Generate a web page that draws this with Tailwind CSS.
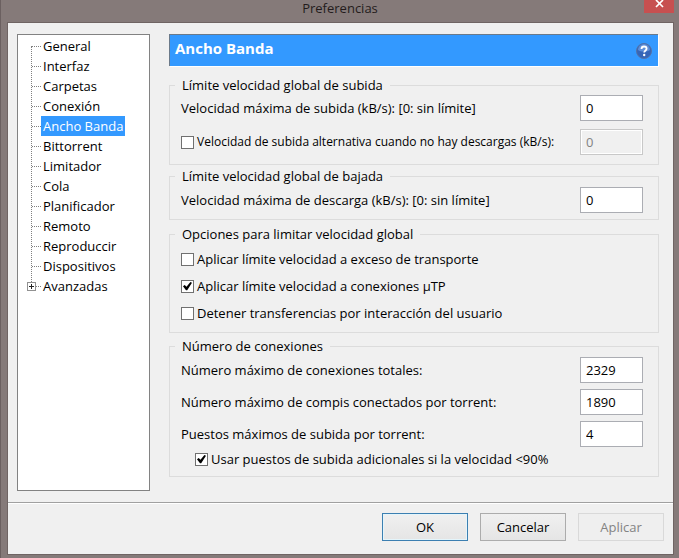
<!DOCTYPE html>
<html lang="es">
<head>
  <meta charset="UTF-8">
  <meta name="viewport" content="width=device-width, initial-scale=1.0">
  <title>Preferencias</title>
  <script src="https://cdn.jsdelivr.net/npm/@tailwindcss/browser@4"></script>
</head>
<body class="min-h-screen flex flex-col bg-[#857a79] border-l border-[#6b6060] font-['Open_Sans','Noto_Sans',sans-serif] text-[13px] leading-5 text-black">
  <!-- Title bar -->
  <header class="relative h-[22px] shrink-0 flex justify-center">
    <h1 class="text-[13px] leading-4 text-[#241c1c]">Preferencias</h1>
    <button aria-label="Cerrar" class="absolute right-[5px] top-0 w-[30px] h-[13px] bg-[#c75050] flex justify-center">
      <svg class="w-[9px] h-[8px]" viewBox="0 0 9 8" fill="none" stroke="#fff" stroke-width="1.7"><path d="M1 0l7 7M8 0L1 7"/></svg>
    </button>
  </header>

  <main class="flex-1 flex flex-col ml-[6px] mr-[5px] mb-[3px] bg-[#f0f0f0] border border-[#6f6463]">
    <div class="flex-1 flex gap-[19px] pl-[9px] pr-[14px] pt-[11px] pb-[11px]">
      <!-- Section tree -->
      <nav class="w-[133px] shrink-0 bg-white border border-[#828282] pt-px">
        <ul class="relative">
          <li class="absolute left-[13px] top-[10px] h-[240px] border-l border-dotted border-[#808080]" aria-hidden="true"></li>
          <li class="flex items-center pl-[14px]"><span class="w-[9px] border-t border-dotted border-[#808080]"></span><a href="#" class="px-[2px]">General</a></li>
          <li class="flex items-center pl-[14px]"><span class="w-[9px] border-t border-dotted border-[#808080]"></span><a href="#" class="px-[2px]">Interfaz</a></li>
          <li class="flex items-center pl-[14px]"><span class="w-[9px] border-t border-dotted border-[#808080]"></span><a href="#" class="px-[2px]">Carpetas</a></li>
          <li class="flex items-center pl-[14px]"><span class="w-[9px] border-t border-dotted border-[#808080]"></span><a href="#" class="px-[2px]">Conexión</a></li>
          <li class="flex items-center pl-[14px]"><span class="w-[9px] border-t border-dotted border-[#808080]"></span><a href="#" aria-current="page" class="px-[2px] bg-[#3399ff] text-white">Ancho Banda</a></li>
          <li class="flex items-center pl-[14px]"><span class="w-[9px] border-t border-dotted border-[#808080]"></span><a href="#" class="px-[2px]">Bittorrent</a></li>
          <li class="flex items-center pl-[14px]"><span class="w-[9px] border-t border-dotted border-[#808080]"></span><a href="#" class="px-[2px]">Limitador</a></li>
          <li class="flex items-center pl-[14px]"><span class="w-[9px] border-t border-dotted border-[#808080]"></span><a href="#" class="px-[2px]">Cola</a></li>
          <li class="flex items-center pl-[14px]"><span class="w-[9px] border-t border-dotted border-[#808080]"></span><a href="#" class="px-[2px]">Planificador</a></li>
          <li class="flex items-center pl-[14px]"><span class="w-[9px] border-t border-dotted border-[#808080]"></span><a href="#" class="px-[2px]">Remoto</a></li>
          <li class="flex items-center pl-[14px]"><span class="w-[9px] border-t border-dotted border-[#808080]"></span><a href="#" class="px-[2px]">Reproduccir</a></li>
          <li class="flex items-center pl-[14px]"><span class="w-[9px] border-t border-dotted border-[#808080]"></span><a href="#" class="px-[2px]">Dispositivos</a></li>
          <li class="relative flex items-center pl-[14px]">
            <button aria-label="Expandir Avanzadas" class="absolute left-[9px] top-[6px]">
              <svg class="block w-[9px] h-[9px]" viewBox="0 0 9 9" shape-rendering="crispEdges"><rect x=".5" y=".5" width="8" height="8" fill="#fff" stroke="#919191"/><path d="M2 4.5h5M4.5 2v5" stroke="#222"/></svg>
            </button>
            <span class="w-[9px] border-t border-dotted border-[#808080]"></span><a href="#" class="px-[2px]">Avanzadas</a>
          </li>
        </ul>
      </nav>

      <!-- Bandwidth page -->
      <section class="flex-1 min-w-0">
        <div class="h-8 mr-px bg-[#3399ff] border-t border-l border-t-[#6b7a8a] border-l-[#6b7a8a] shadow-[1px_1px_0_#fff] flex justify-between pl-[5px] pr-[6px]">
          <h2 class="text-[15px] leading-[26px] font-bold text-white">Ancho Banda</h2>
          <button aria-label="Ayuda" class="self-center">
            <svg class="block w-4 h-4" viewBox="0 0 16 16"><circle cx="8" cy="8" r="7.5" fill="#3565b8" stroke="#5572a6"/><path d="M2 7a6 6 0 0 1 12 0c-3 2-9 2-12 0z" fill="#5f8fd8"/><path d="M5.500 6C5.500 4.400 6.600 3.500 8 3.500s2.600.8 2.600 2.200c0 1.700-2.400 1.900-2.400 3.900" fill="none" stroke="#fff" stroke-width="1.800"/><circle cx="8.200" cy="12" r="1.200" fill="#fff"/></svg>
          </button>
        </div>

        <fieldset class="mt-[11px] border border-[#dcdcdc] px-[5px] pb-[9px]">
          <legend class="px-[7px] leading-4">Límite velocidad global de subida</legend>
          <div class="pl-[6px] pr-[10px] pt-[2px] flex flex-col gap-2">
            <div class="flex items-center justify-between">
              <label for="up">Velocidad máxima de subida (kB/s): [0: sin límite]</label>
              <input id="up" type="text" value="0" class="w-[63px] h-[26px] bg-white border border-[#abadb3] px-[5px]">
            </div>
            <div class="flex items-center justify-between">
              <label class="flex items-center gap-[3px] text-xs leading-5 whitespace-nowrap"><input type="checkbox" class="appearance-none w-[13px] h-[13px] bg-white border border-[#707070]">Velocidad de subida alternativa cuando no hay descargas (kB/s):</label>
              <input type="text" value="0" disabled aria-label="Velocidad de subida alternativa" class="w-[63px] h-[26px] bg-[#f0f0f0] border border-[#c8c8c8] px-[5px] text-[#838383] shadow-[inset_0_0_0_1px_#fff]">
            </div>
          </div>
        </fieldset>

        <fieldset class="mt-[3px] border border-[#dcdcdc] px-[5px] pb-[6px]">
          <legend class="px-[7px] leading-4">Límite velocidad global de bajada</legend>
          <div class="pl-[6px] pr-[10px] pt-[3px] flex items-center justify-between">
            <label for="down">Velocidad máxima de descarga (kB/s): [0: sin límite]</label>
            <input id="down" type="text" value="0" class="w-[63px] h-[26px] bg-white border border-[#abadb3] px-[5px]">
          </div>
        </fieldset>

        <fieldset class="mt-[6px] border border-[#dcdcdc] px-[5px] pb-[9px]">
          <legend class="px-[7px] leading-4">Opciones para limitar velocidad global</legend>
          <div class="pl-[6px] pt-[7px] flex flex-col items-start gap-[7px]">
            <label class="flex items-center gap-[3px]"><input type="checkbox" class="appearance-none w-[13px] h-[13px] bg-white border border-[#707070]">Aplicar límite velocidad a exceso de transporte</label>
            <label class="relative flex items-center gap-[3px]">
              <input type="checkbox" checked class="peer appearance-none w-[13px] h-[13px] bg-white border border-[#707070]">
              <svg class="absolute left-0 w-[13px] h-[13px] hidden peer-checked:block" viewBox="0 0 13 13"><path d="M2 6.300l1.700-1.300L5.500 6.800 9.400 2l1.600.8L6.200 10.300H5z" fill="#000"/></svg>
              Aplicar límite velocidad a conexiones µTP
            </label>
            <label class="flex items-center gap-[3px]"><input type="checkbox" class="appearance-none w-[13px] h-[13px] bg-white border border-[#707070]">Detener transferencias por interacción del usuario</label>
          </div>
        </fieldset>

        <fieldset class="mt-[5px] border border-[#dcdcdc] px-[5px] pb-[7px]">
          <legend class="px-[7px] leading-4">Número de conexiones</legend>
          <div class="pl-[6px] pr-[10px] pt-[3px] flex flex-col gap-[6px]">
            <div class="flex items-center justify-between">
              <label for="conns">Número máximo de conexiones totales:</label>
              <input id="conns" type="text" value="2329" class="w-[63px] h-[26px] bg-white border border-[#abadb3] px-[5px]">
            </div>
            <div class="flex items-center justify-between">
              <label for="peers">Número máximo de compis conectados por torrent:</label>
              <input id="peers" type="text" value="1890" class="w-[63px] h-[26px] bg-white border border-[#abadb3] px-[5px]">
            </div>
            <div class="flex items-center justify-between">
              <label for="slots">Puestos máximos de subida por torrent:</label>
              <input id="slots" type="text" value="4" class="w-[63px] h-[26px] bg-white border border-[#abadb3] px-[5px]">
            </div>
          </div>
          <label class="relative mt-[2px] ml-5 flex items-center gap-[3px]">
            <input type="checkbox" checked class="peer appearance-none w-[13px] h-[13px] bg-white border border-[#707070]">
            <svg class="absolute left-0 w-[13px] h-[13px] hidden peer-checked:block" viewBox="0 0 13 13"><path d="M2 6.300l1.700-1.300L5.500 6.800 9.400 2l1.600.8L6.200 10.300H5z" fill="#000"/></svg>
            Usar puestos de subida adicionales si la velocidad &lt;90%
          </label>
        </fieldset>
      </section>
    </div>

    <footer class="border-t border-[#a0a0a0] shadow-[inset_0_1px_0_#fff] pt-[10px] pb-[13px] pr-[9px] flex justify-end gap-3">
      <button class="w-[86px] h-7 border border-[#3c7fb1] bg-linear-to-b from-[#f0f0f0] to-[#e5e5e5] shadow-[inset_0_0_0_1px_#e4f5fb]">OK</button>
      <button class="w-[86px] h-7 border border-[#acacac] bg-linear-to-b from-[#f0f0f0] to-[#e5e5e5]">Cancelar</button>
      <button disabled class="w-[86px] h-7 border border-[#d9d9d9] bg-[#efefef] text-[#838383]">Aplicar</button>
    </footer>
  </main>
</body>
</html>
